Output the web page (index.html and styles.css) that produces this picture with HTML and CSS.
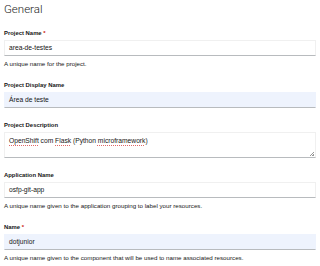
FILE: index.html
```html
<!DOCTYPE html>
<html lang="pt">
<head>
    <meta charset="UTF-8">
    <title>General</title>
    <link rel="stylesheet" href="styles.css">
</head>
<body>
<div class="form">
    <h2 class="title">General</h2>

    <div class="group">
        <label class="label">Project Name <span class="req">*</span></label>
        <div class="input">area-de-testes</div>
        <p class="helper">A unique name for the project.</p>
    </div>

    <div class="group">
        <label class="label">Project Display Name</label>
        <div class="input filled">Área de teste</div>
    </div>

    <div class="group">
        <label class="label">Project Description</label>
        <div class="input area"><span class="typo">OpenShift</span> com <span class="typo">Flask</span> (Python <span class="typo">microframework</span>)<i class="grip"></i></div>
    </div>

    <div class="group">
        <label class="label">Application Name</label>
        <div class="input">osfp-git-app</div>
        <p class="helper">A unique name given to the application grouping to label your resources.</p>
    </div>

    <div class="group">
        <label class="label">Name <span class="req">*</span></label>
        <div class="input filled">dotjunior</div>
        <p class="helper">A unique name given to the component that will be used to name associated resources.</p>
    </div>
</div>
</body>
</html>
```

FILE: styles.css
```css
* {
    margin: 0;
    padding: 0;
    box-sizing: border-box;
}

body {
    background: #fff;
    color: #151515;
    font-family: "Liberation Sans", Arial, sans-serif;
    overflow: hidden;
}

.form {
    width: 320px;
    padding: 0 4px;
}

.title {
    font-family: Roboto, "Liberation Sans", sans-serif;
    font-weight: 300;
    font-size: 11.5px;
    line-height: 18px;
    margin-bottom: 11px;
    color: #222;
}

.group {
    margin-bottom: 13px;
}

.label {
    display: block;
    font-size: 5.9px;
    font-weight: bold;
    line-height: 8px;
    margin-bottom: 3px;
}

.req {
    color: #c9190b;
}

.input {
    position: relative;
    height: 16px;
    border: 1px solid #f0f0f0;
    border-bottom-color: #b8bbbe;
    padding: 0 4px;
    font-size: 6.7px;
    line-height: 14px;
    background: #fff;
}

.input.filled {
    background: #eef3fd;
    border-color: #eef3fd;
    border-bottom-color: #b8bbbe;
}

.input.area {
    height: 26px;
    line-height: 13px;
    padding-top: 1px;
    margin-bottom: 7px;
}

.typo {
    text-decoration: underline dotted #e06666;
    text-decoration-thickness: 1px;
    text-underline-offset: 1.5px;
}

.grip {
    position: absolute;
    right: 1px;
    bottom: 1px;
    width: 4px;
    height: 4px;
    background: linear-gradient(135deg, transparent 45%, #999 45%, #999 60%, transparent 60%, transparent 75%, #999 75%);
}

.helper {
    font-size: 6.2px;
    line-height: 9px;
    margin-top: 3px;
    margin-bottom: 1px;
    color: #151515;
}
```
